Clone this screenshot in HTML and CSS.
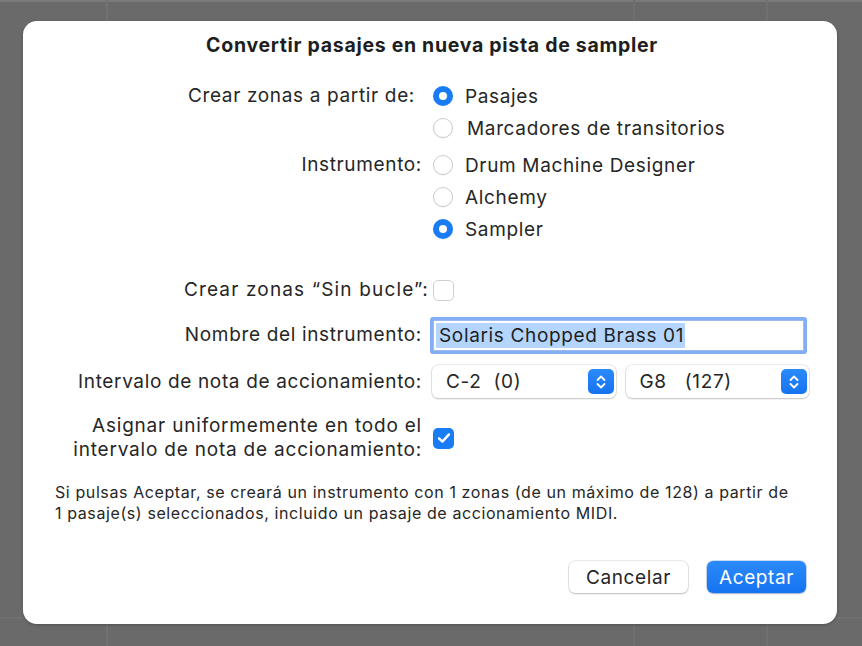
FILE: index.html
```html
<!DOCTYPE html>
<html lang="es">
<head>
<meta charset="utf-8">
<title>Convertir pasajes en nueva pista de sampler</title>
<link rel="stylesheet" href="styles.css">
</head>
<body>
<div class="backdrop">
  <div class="dialog">
    <h1 class="title">Convertir pasajes en nueva pista de sampler</h1>

    <div class="form">
      <div class="label label-group label-narrow">Crear zonas a partir de:</div>
      <div class="group">
        <div class="option"><span class="radio on"></span><span class="opt-text">Pasajes</span></div>
        <div class="option"><span class="radio"></span><span class="opt-text shift">Marcadores de transitorios</span></div>
      </div>

      <div class="label label-group row-gap-s">Instrumento:</div>
      <div class="group row-gap-s">
        <div class="option"><span class="radio"></span><span class="opt-text">Drum Machine Designer</span></div>
        <div class="option"><span class="radio"></span><span class="opt-text">Alchemy</span></div>
        <div class="option"><span class="radio on"></span><span class="opt-text">Sampler</span></div>
      </div>

      <div class="label row-check row-gap-l label-wide">Crear zonas “Sin bucle”:</div>
      <div class="control row-check row-gap-l"><span class="checkbox"></span></div>

      <div class="label row-field row-gap-m">Nombre del instrumento:</div>
      <div class="control row-field row-gap-m">
        <div class="textfield"><span class="selected">Solaris Chopped Brass 01</span></div>
      </div>

      <div class="label row-popup row-gap-m2">Intervalo de nota de accionamiento:</div>
      <div class="control row-popup row-gap-m2 popups">
        <div class="popup"><span class="popup-text">C-2&nbsp; (0)</span>
          <span class="stepper"><svg width="12" height="16" viewBox="0 0 12 16"><path d="M2.5 6 L6 2.5 L9.5 6 M2.5 10 L6 13.5 L9.5 10" fill="none" stroke="#fff" stroke-width="1.8" stroke-linecap="round" stroke-linejoin="round"/></svg></span>
        </div>
        <div class="popup"><span class="popup-text">G8 &nbsp; (127)</span>
          <span class="stepper"><svg width="12" height="16" viewBox="0 0 12 16"><path d="M2.5 6 L6 2.5 L9.5 6 M2.5 10 L6 13.5 L9.5 10" fill="none" stroke="#fff" stroke-width="1.8" stroke-linecap="round" stroke-linejoin="round"/></svg></span>
        </div>
      </div>

      <div class="label row-two row-gap-t">Asignar uniformemente en todo el<br>intervalo de nota de accionamiento:</div>
      <div class="control row-two row-gap-t"><span class="checkbox on"><svg width="14" height="12" viewBox="0 0 14 12"><path d="M2 6.3 L5.4 9.6 L12 2.4" fill="none" stroke="#fff" stroke-width="2.4" stroke-linecap="round" stroke-linejoin="round"/></svg></span></div>
    </div>

    <p class="info">Si pulsas Aceptar, se creará un instrumento con 1 zonas (de un máximo de 128) a partir de<br>1 pasaje(s) seleccionados, incluido un pasaje de accionamiento MIDI.</p>

    <div class="buttons">
      <button class="btn">Cancelar</button>
      <button class="btn primary">Aceptar</button>
    </div>
  </div>
</div>
</body>
</html>
```

FILE: styles.css
```css
html, body {
  margin: 0;
  padding: 0;
}

body {
  width: 862px;
  height: 646px;
  overflow: hidden;
  font-family: Inter, "Noto Sans", "Liberation Sans", sans-serif;
  color: #232323;
}

.backdrop {
  width: 862px;
  height: 646px;
  box-sizing: border-box;
  padding: 21px 0 0 23px;
  background-color: #6a6a6a;
  background-image:
    linear-gradient(to right, transparent 106px, #727272 106px, #727272 108px, transparent 108px),
    linear-gradient(to right, transparent 633px, #707070 633px, #707070 635px, transparent 635px),
    linear-gradient(to right, transparent 766px, #707070 766px, #707070 768px, transparent 768px),
    linear-gradient(to bottom, #7a7a7a 0, #7a7a7a 2px, transparent 2px),
    linear-gradient(to bottom, transparent 617px, #707070 617px, #707070 619px, transparent 619px);
}

.dialog {
  width: 814px;
  height: 603px;
  box-sizing: border-box;
  background: #ffffff;
  border-radius: 14px;
  padding: 12px 28px 0 32px;
  box-shadow: 0 1px 3px rgba(0, 0, 0, 0.25);
  display: flex;
  flex-direction: column;
}

.title {
  margin: 0;
  font-size: 19.5px;
  line-height: 24px;
  font-weight: 700;
  letter-spacing: 0.7px;
  text-align: center;
  color: #1e1e1e;
}

.form {
  margin-top: 23px;
  display: grid;
  grid-template-columns: 367px 377px;
  column-gap: 10px;
  font-size: 19px;
  letter-spacing: 0.65px;
}

.label {
  text-align: right;
  line-height: 32px;
  color: #262626;
  white-space: nowrap;
}

.label-wide {
  margin-right: -7px;
  letter-spacing: 1.15px;
}

.label-narrow {
  margin-right: 7px;
}

.group {
  display: flex;
  flex-direction: column;
}

.row-gap-s { margin-top: 5px; }
.row-gap-l { margin-top: 29px; }
.row-gap-m { margin-top: 12px; }
.row-gap-m2 { margin-top: 13px; }
.row-gap-t { margin-top: 16px; }

.option {
  height: 32px;
  display: flex;
  align-items: center;
}

.radio {
  width: 20px;
  height: 20px;
  box-sizing: border-box;
  border-radius: 50%;
  border: 1px solid #cdcdcd;
  background: #fff;
  box-shadow: 0 0.5px 1px rgba(0, 0, 0, 0.08);
  margin-left: 1px;
  flex: none;
  position: relative;
}

.radio.on {
  border: none;
  background: #1a7cf5;
}

.radio.on::after {
  content: "";
  position: absolute;
  left: 6px;
  top: 6px;
  width: 8px;
  height: 8px;
  border-radius: 50%;
  background: #fff;
}

.opt-text {
  margin-left: 12px;
  color: #262626;
}

.opt-text.shift {
  margin-left: 14px;
}

.control {
  display: flex;
  align-items: center;
}

.row-check { height: 32px; }
.row-field { height: 34px; }
.row-popup { height: 33px; }

.label.row-field { line-height: 34px; }
.label.row-popup { line-height: 33px; }
.label.row-two { line-height: 24px; letter-spacing: 0.8px; }

.checkbox {
  width: 21px;
  height: 21px;
  box-sizing: border-box;
  border-radius: 5px;
  border: 1px solid #d0d0d0;
  background: #fff;
  margin-left: 1px;
  display: flex;
  align-items: center;
  justify-content: center;
}

.checkbox.on {
  border: none;
  background: #1a7cf5;
}

.textfield {
  margin-left: 1px;
  width: 371px;
  height: 31px;
  box-sizing: border-box;
  background: #fff;
  border: 1px solid #9cbcf0;
  box-shadow: 0 0 0 3px #84aef3;
  border-radius: 1px;
  display: flex;
  align-items: center;
  padding-left: 2px;
}

.selected {
  background: #b4d5fe;
  line-height: 25px;
  padding: 0 1px 0 3px;
  color: #1f1f1f;
}

.popups {
  gap: 10px;
}

.popup {
  flex: 1;
  height: 33px;
  box-sizing: border-box;
  background: #fff;
  border-radius: 6px;
  box-shadow: 0 0 0 0.5px rgba(0, 0, 0, 0.15), 0 1px 2px rgba(0, 0, 0, 0.18);
  display: flex;
  align-items: center;
  justify-content: space-between;
  padding: 0 2px 0 14px;
}

.popup-text {
  color: #262626;
  white-space: pre;
}

.stepper {
  width: 26px;
  height: 25px;
  border-radius: 5px;
  background: linear-gradient(#2a8bfb, #1673f0);
  display: flex;
  align-items: center;
  justify-content: center;
}

.row-two {
  height: 48px;
}

.info {
  margin: 20px 0 0 0;
  font-size: 16px;
  line-height: 21px;
  letter-spacing: 0.6px;
  color: #262626;
}

.buttons {
  margin-top: 37px;
  display: flex;
  justify-content: flex-end;
  gap: 19px;
  padding-right: 3px;
}

.btn {
  font-family: inherit;
  font-size: 19px;
  letter-spacing: 0.6px;
  height: 32px;
  border: none;
  border-radius: 6px;
  background: #fff;
  color: #262626;
  box-shadow: 0 0 0 0.5px rgba(0, 0, 0, 0.15), 0 1px 2px rgba(0, 0, 0, 0.2);
  width: 119px;
  padding: 0;
}

.btn.primary {
  width: 99px;
  color: #fff;
  background: linear-gradient(#2a8bfb, #1673f0);
  box-shadow: 0 0 0 0.5px rgba(0, 80, 200, 0.4), 0 1px 2px rgba(0, 0, 0, 0.2);
}
```
